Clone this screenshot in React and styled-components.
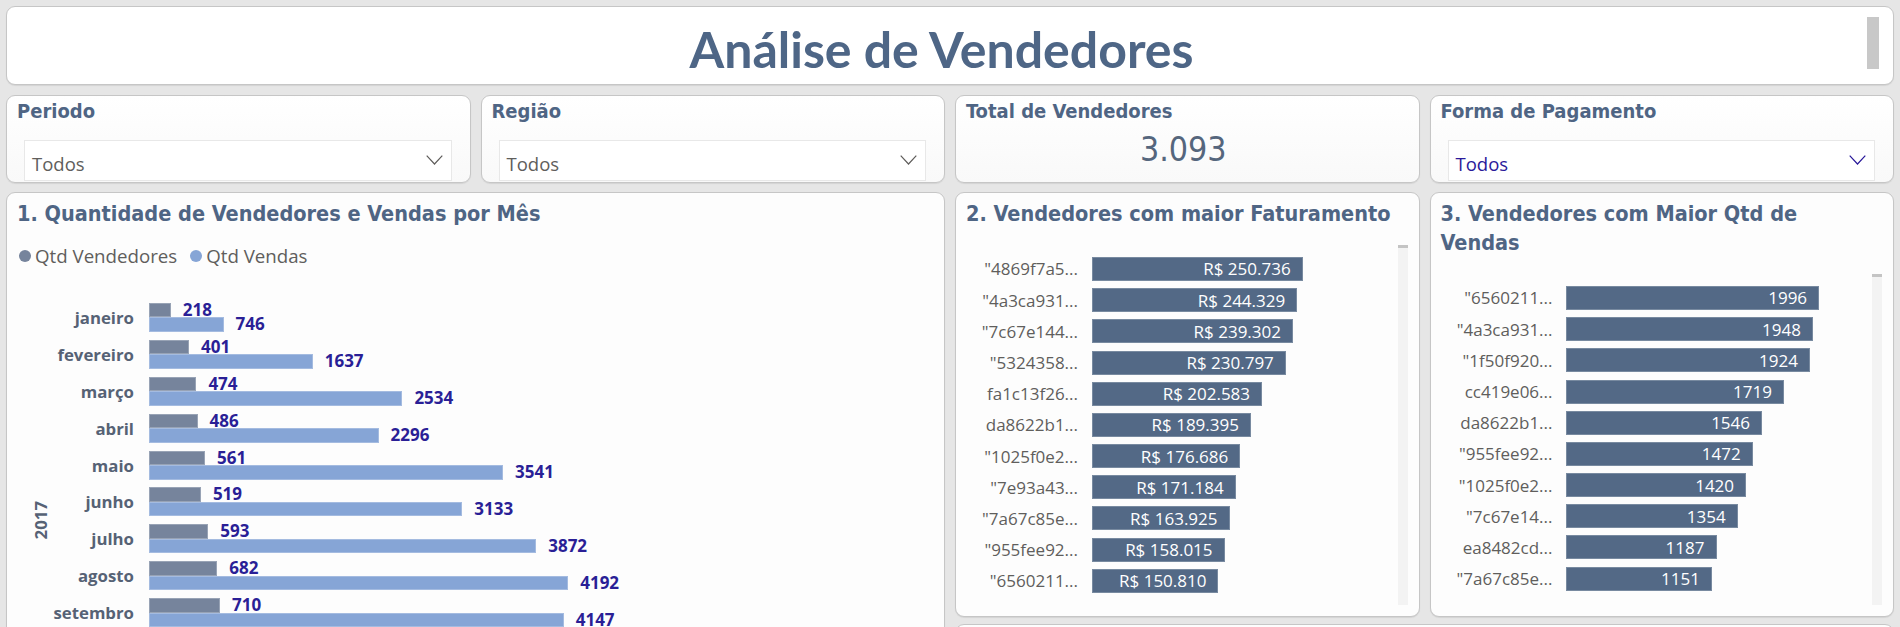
import React from "react";
import styled, { createGlobalStyle } from "styled-components";

const HEAD = `"DejaVu Sans Condensed", "DejaVu Sans", sans-serif`;
const TEXT = `"Open Sans", "Noto Sans", sans-serif`;

const GlobalStyle = createGlobalStyle`
  html, body {
    margin: 0;
    padding: 0;
    overflow: hidden;
    background: #e6e6e6;
  }
`;

const months = [
  { name: "janeiro", sellers: 218, orders: 746 },
  { name: "fevereiro", sellers: 401, orders: 1637 },
  { name: "março", sellers: 474, orders: 2534 },
  { name: "abril", sellers: 486, orders: 2296 },
  { name: "maio", sellers: 561, orders: 3541 },
  { name: "junho", sellers: 519, orders: 3133 },
  { name: "julho", sellers: 593, orders: 3872 },
  { name: "agosto", sellers: 682, orders: 4192 },
  { name: "setembro", sellers: 710, orders: 4147 },
  { name: "outubro", sellers: 757, orders: 4478 },
  { name: "novembro", sellers: 882, orders: 7289 },
  { name: "dezembro", sellers: 801, orders: 5513 },
];

const revenue = [
  ['"4869f7a5...', 250736],
  ['"4a3ca931...', 244329],
  ['"7c67e144...', 239302],
  ['"5324358...', 230797],
  ["fa1c13f26...", 202583],
  ["da8622b1...", 189395],
  ['"1025f0e2...', 176686],
  ['"7e93a43...', 171184],
  ['"7a67c85e...', 163925],
  ['"955fee92...', 158015],
  ['"6560211...', 150810],
];

const salesCount = [
  ['"6560211...', 1996],
  ['"4a3ca931...', 1948],
  ['"1f50f920...', 1924],
  ["cc419e06...", 1719],
  ["da8622b1...", 1546],
  ['"955fee92...', 1472],
  ['"1025f0e2...', 1420],
  ['"7c67e14...', 1354],
  ["ea8482cd...", 1187],
  ['"7a67c85e...', 1151],
];

const fmtBRL = (v) => "R$ " + v.toLocaleString("pt-BR");

const Page = styled.div`
  padding: 6px;
  display: flex;
  flex-direction: column;
  font-family: ${TEXT};
`;

const Card = styled.div`
  box-sizing: border-box;
  background: #fdfdfd;
  border: 1px solid #c6c6c6;
  border-radius: 9px;
  box-shadow: 0 1px 1px rgba(0, 0, 0, 0.08);
`;

const TitleCard = styled(Card)`
  height: 79px;
  display: flex;
  background: #ffffff;
`;

const PageTitle = styled.h1`
  flex: 1;
  margin: 0;
  padding: 11.6px 0 0 17px;
  text-align: center;
  font-family: Lato, sans-serif;
  font-weight: 700;
  font-size: 50px;
  line-height: 60px;
  color: #4e6686;
`;

const TitleThumb = styled.div`
  width: 12px;
  margin: 10px 14px 15px 8px;
  background: #c8c8c8;
`;

const FilterRow = styled.div`
  display: grid;
  grid-template-columns: repeat(4, 1fr);
  column-gap: 10px;
  margin-top: 10px;
  height: 88px;
`;

const SlicerCard = styled(Card)`
  padding: 1.7px 18px 0 10px;
  background: linear-gradient(#ffffff, #f9f9f9);
  overflow: hidden;
`;

const SlicerLabel = styled.div`
  font-family: ${HEAD};
  font-stretch: condensed;
  font-weight: 700;
  font-size: 20px;
  line-height: 26px;
  color: #4f6584;
  white-space: nowrap;
`;

const Dropdown = styled.div`
  box-sizing: border-box;
  height: 41px;
  margin: 16.3px 0 0 7px;
  padding: 0 8px 0 7px;
  border: 1px solid #e8e8e8;
  background: #ffffff;
  display: flex;
  align-items: center;
  justify-content: space-between;
  color: ${(p) => (p.$accent ? "#2a1a9a" : "#605e5c")};
`;

const DropdownValue = styled.span`
  margin-top: 8px;
  font-size: 18.5px;
  line-height: 24px;
`;

const KpiValue = styled.div`
  margin-top: 6.3px;
  text-align: center;
  font-family: ${HEAD};
  font-stretch: condensed;
  font-size: 33.7px;
  line-height: 40px;
  color: #55667d;
`;

const ChartGrid = styled.div`
  display: grid;
  grid-template-columns: repeat(4, 1fr);
  grid-template-rows: 425px 200px;
  column-gap: 10px;
  row-gap: 7px;
  margin-top: 9px;
`;

const ChartCard = styled(Card)`
  grid-column: ${(p) => p.$col};
  grid-row: ${(p) => p.$row};
  display: flex;
  flex-direction: column;
  padding: 5.6px 11px 11px 10px;
  overflow: hidden;
  min-height: 0;
`;

const ChartTitle = styled.h2`
  margin: 0;
  max-width: ${(p) => p.$maxWidth || "none"};
  font-family: ${HEAD};
  font-stretch: condensed;
  font-weight: 700;
  font-size: 21.5px;
  line-height: 29px;
  color: #4f6584;
`;

const Legend = styled.div`
  display: flex;
  align-items: center;
  gap: 13px;
  margin: 15.4px 0 0 2px;
  font-size: 18.7px;
  line-height: 26px;
  color: #605e5c;
`;

const LegendItem = styled.div`
  display: flex;
  align-items: center;
  gap: 4px;
`;

const Dot = styled.span`
  width: 12px;
  height: 12px;
  border-radius: 50%;
  background: ${(p) => p.$color};
`;

const MonthChart = styled.div`
  display: flex;
  margin-top: 34px;
`;

const YearAxis = styled.div`
  width: 20px;
  margin-left: 13px;
  display: flex;
  align-items: center;
  justify-content: center;
`;

const YearLabel = styled.span`
  writing-mode: vertical-rl;
  transform: rotate(180deg);
  font-weight: 700;
  font-size: 16.8px;
  color: #566275;
`;

const MonthList = styled.div`
  flex: 1;
  display: flex;
  flex-direction: column;
  gap: 7.9px;
`;

const MonthRow = styled.div`
  display: grid;
  grid-template-columns: 84px 1fr;
  column-gap: 15px;
  align-items: center;
`;

const MonthName = styled.span`
  text-align: right;
  font-weight: 700;
  font-size: 16.8px;
  color: #566275;
  white-space: nowrap;
`;

const BarLine = styled.div`
  display: flex;
  align-items: center;
  height: 14.5px;
`;

const Bar = styled.div`
  flex: none;
  height: 100%;
  box-sizing: border-box;
  background: ${(p) => p.$color};
  box-shadow: inset 0 0 0 1px rgba(255, 255, 255, 0.25);
`;

const DataLabel = styled.span`
  margin-left: 12px;
  font-weight: 700;
  font-size: 17px;
  line-height: 14.5px;
  color: #2a1f96;
  white-space: nowrap;
`;

const RankBody = styled.div`
  flex: 1;
  display: flex;
  margin-top: 17.4px;
  min-height: 0;
`;

const RankList = styled.div`
  flex: 1;
  display: flex;
  flex-direction: column;
  gap: 7.2px;
  padding-top: 12px;
`;

const RankRow = styled.div`
  display: grid;
  grid-template-columns: 112px 1fr;
  column-gap: 13.5px;
  align-items: center;
  height: 24px;
`;

const RankName = styled.span`
  text-align: right;
  font-size: 17px;
  color: #605e5c;
  white-space: nowrap;
`;

const RankBar = styled.div`
  box-sizing: border-box;
  height: 24px;
  padding-right: 12px;
  display: flex;
  align-items: center;
  justify-content: flex-end;
  background: #536986;
  box-shadow: inset 0 0 0 1px rgba(255, 255, 255, 0.22);
  color: #ffffff;
  font-size: 17px;
  white-space: nowrap;
`;

const ScrollTrack = styled.div`
  width: 10px;
  background: #f3f3f3;
  border-top: 3px solid #c4c4c4;
`;

const Chevron = ({ color }) => (
  <svg width="17" height="10" viewBox="0 0 17 10" fill="none">
    <polyline points="0.7,0.7 8.5,9 16.3,0.7" stroke={color} strokeWidth="1.2" />
  </svg>
);

const Slicer = ({ label, accent }) => (
  <SlicerCard>
    <SlicerLabel>{label}</SlicerLabel>
    <Dropdown $accent={accent}>
      <DropdownValue>Todos</DropdownValue>
      <Chevron color={accent ? "#2a1a9a" : "#605e5c"} />
    </Dropdown>
  </SlicerCard>
);

const RankChart = ({ title, titleWidth, rows, scale, format }) => (
  <ChartCard $col="auto" $row="1">
    <ChartTitle $maxWidth={titleWidth}>{title}</ChartTitle>
    <RankBody>
      <RankList>
        {rows.map(([name, value]) => (
          <RankRow key={name + value}>
            <RankName>{name}</RankName>
            <RankBar style={{ width: value * scale }}>{format(value)}</RankBar>
          </RankRow>
        ))}
      </RankList>
      <ScrollTrack />
    </RankBody>
  </ChartCard>
);

export default function App() {
  return (
    <Page>
      <GlobalStyle />
      <TitleCard>
        <PageTitle>Análise de Vendedores</PageTitle>
        <TitleThumb />
      </TitleCard>

      <FilterRow>
        <Slicer label="Periodo" />
        <Slicer label="Região" />
        <SlicerCard>
          <SlicerLabel>Total de Vendedores</SlicerLabel>
          <KpiValue>3.093</KpiValue>
        </SlicerCard>
        <Slicer label="Forma de Pagamento" accent />
      </FilterRow>

      <ChartGrid>
        <ChartCard $col="1 / 3" $row="1 / 3">
          <ChartTitle>1. Quantidade de Vendedores e Vendas por Mês</ChartTitle>
          <Legend>
            <LegendItem>
              <Dot $color="#76849c" />
              Qtd Vendedores
            </LegendItem>
            <LegendItem>
              <Dot $color="#86a5d6" />
              Qtd Vendas
            </LegendItem>
          </Legend>
          <MonthChart>
            <YearAxis>
              <YearLabel>2017</YearLabel>
            </YearAxis>
            <MonthList>
              {months.map((m) => (
                <MonthRow key={m.name}>
                  <MonthName>{m.name}</MonthName>
                  <div>
                    <BarLine>
                      <Bar $color="#76849c" style={{ width: m.sellers * 0.1 }} />
                      <DataLabel>{m.sellers}</DataLabel>
                    </BarLine>
                    <BarLine>
                      <Bar $color="#86a5d6" style={{ width: m.orders * 0.1 }} />
                      <DataLabel>{m.orders}</DataLabel>
                    </BarLine>
                  </div>
                </MonthRow>
              ))}
            </MonthList>
          </MonthChart>
        </ChartCard>

        <RankChart
          title="2. Vendedores com maior Faturamento"
          rows={revenue}
          scale={0.000842}
          format={fmtBRL}
        />
        <RankChart
          title="3. Vendedores com Maior Qtd de Vendas"
          titleWidth="360px"
          rows={salesCount}
          scale={0.1268}
          format={(v) => String(v)}
        />

        <ChartCard $col="3 / 5" $row="2" />
      </ChartGrid>
    </Page>
  );
}
